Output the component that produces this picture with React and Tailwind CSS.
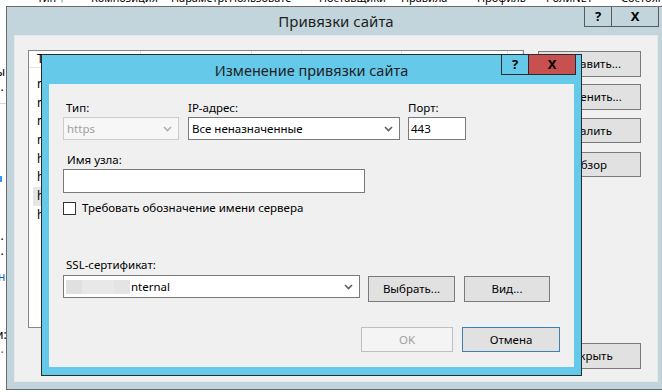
import React from "react";

function Chevron({ color = "#606060" }) {
  return (
    <svg width="9" height="6" viewBox="0 0 9 6" className="shrink-0">
      <polyline points="1,1 4.5,4.5 8,1" fill="none" stroke={color} strokeWidth="1.6" />
    </svg>
  );
}

function Button({ children, className = "" }) {
  return (
    <div
      className={
        "flex items-center justify-center border border-[#7a7a7a] bg-[#e1e1e1] text-[11.5px] text-black " +
        className
      }
    >
      {children}
    </div>
  );
}

function CaptionButtons({ dark, closeBg }) {
  return (
    <div className="flex h-[20px]">
      <div
        className={
          "flex w-[28px] items-center justify-center border-x border-b text-[13px] font-bold " +
          dark
        }
      >
        ?
      </div>
      <div
        className={
          "flex w-[47px] items-center justify-center border-r border-b text-[13px] font-bold " +
          dark +
          " " +
          closeBg
        }
      >
        X
      </div>
    </div>
  );
}

// column headers of the IIS list behind the dialogs: text, left, width
const headerCols = [
  ["Тип ↑", 37, 40],
  ["Композиция", 91, 76],
  ["Параметры", 171, 56],
  ["Пользовате", 229, 84],
  ["Поставщики", 319, 76],
  ["Правила", 401, 56],
  ["Профиль", 477, 50],
  ["РолиNET", 546, 60],
  ["Состояние", 621, 60],
];

const listRows = [
  "net.tcp",
  "net.pipe",
  "net.msmq",
  "msmq.formatname",
  "http",
  "https",
  "https",
  "https",
];

export default function App() {
  return (
    <div
      className="relative h-[392px] w-[662px] overflow-hidden bg-white text-black"
      style={{ fontFamily: '"Noto Sans", "Liberation Sans", sans-serif' }}
    >
      {/* IIS manager behind the dialogs */}
      <div className="relative h-[6px] overflow-hidden">
        {headerCols.map(([t, x, w]) => (
          <span
            key={t}
            className="absolute top-[-10px] overflow-hidden whitespace-nowrap text-[11px] leading-[16px]"
            style={{ left: x, width: w }}
          >
            {t}
          </span>
        ))}
      </div>
      <div className="absolute left-0 top-[64px] w-[6px] overflow-hidden text-[12px] leading-[16px]">
        <div className="-ml-[4px]">ы</div>
        <div className="-ml-[6px] -mt-[1px]">...</div>
        <div className="mt-[8px] h-px w-[6px] bg-[#d8d8d8]" />
        <div className="mt-[72px] h-[6px] w-[2px] bg-[#3399ff]" />
        <div className="-ml-[6px] mt-[46px]">...</div>
        <div className="-ml-[6px] -mt-[1px]">...</div>
        <div className="-ml-[2px] mt-[10px] text-[#1a5fb4]">н</div>
        <div className="-ml-[4px] mt-[42px]">и:</div>
        <div className="-ml-[6px] -mt-[2px] text-[#1a5fb4]">...</div>
      </div>

      {/* Привязки сайта */}
      <div className="absolute left-[6px] top-[6px] flex h-[384px] w-[660px] flex-col border border-[#6b6b6b] bg-[#c3d5dc]">
        <div className="relative flex h-[28px] shrink-0 items-start justify-end pr-[6px]">
          <div className="absolute inset-x-0 top-[4px] text-center text-[15px] leading-[20px] text-[#1e1e1e]">
            Привязки сайта
          </div>
          <div className="relative">
            <CaptionButtons dark="border-[#5a5a5a] text-black" closeBg="" />
          </div>
        </div>
        <div className="mx-[7px] mb-[7px] flex flex-1 border border-[#e4e9eb] bg-[#f0f0f0] pl-[13px] pr-[14px] pt-[14px]">
          <div className="flex h-[278px] w-[496px] flex-col overflow-hidden border border-[#828790] bg-white text-[12px]">
            <div className="flex h-[17px] shrink-0">
              {[
                ["Тип", 112],
                ["Имя узла", 111],
                ["Порт", 50],
                ["IP-адрес", 100],
                ["Сведения о привязке", 106],
                ["", 15],
              ].map(([t, w]) => (
                <div
                  key={t + w}
                  className="shrink-0 overflow-hidden whitespace-nowrap border-r border-b border-[#e5e5e5] pl-[8px] leading-[16px]"
                  style={{ width: w }}
                >
                  {t}
                </div>
              ))}
            </div>
            <div className="pt-[7px]">
              {listRows.map((r, i) => (
                <div
                  key={i}
                  className={"ml-[4px] h-[18.7px] pl-[4px] leading-[18px] " + (i === 6 ? "bg-[#e5e5e5]" : "")}
                >
                  {r}
                </div>
              ))}
            </div>
          </div>
          <div className="ml-[14px] flex w-[103px] flex-col">
            <Button className="mt-[1px] h-[26px]">Добавить...</Button>
            <Button className="mt-[7px] h-[26px]">Изменить...</Button>
            <Button className="mt-[8px] h-[25px]">Удалить</Button>
            <Button className="mt-[9px] h-[25px]">Обзор</Button>
            <Button className="mt-[166px] h-[26px]">Закрыть</Button>
          </div>
        </div>
      </div>

      {/* Изменение привязки сайта */}
      <div className="absolute left-[41px] top-[54px] flex h-[322px] w-[541px] flex-col border border-[#2b2b2b] bg-[#65c9ea]">
        <div className="relative flex h-[29px] shrink-0 items-start justify-end pr-[5px]">
          <div className="absolute inset-x-0 top-[5px] text-center text-[14.5px] leading-[20px] text-[#1e1e1e]">
            Изменение привязки сайта
          </div>
          <div className="relative">
            <CaptionButtons dark="border-[#2b2b2b] text-black" closeBg="bg-[#c75050]" />
          </div>
        </div>
        <div className="mx-[7px] flex h-[283px] flex-col bg-[#f0f0f0] pl-[14px] text-[11.5px] leading-[16px]">
          <div className="mt-[16px] flex">
            <div className="w-[125px] pl-[3px]">Тип:</div>
            <div className="w-[220px]">IP-адрес:</div>
            <div>Порт:</div>
          </div>
          <div className="mt-[1px] flex h-[23px]">
            <div className="flex w-[116px] items-center justify-between border border-[#cccccc] bg-[#f7f7f7] pl-[3px] pr-[6px] text-[#a0a0a0]">
              https
              <Chevron color="#b0b0b0" />
            </div>
            <div className="ml-[9px] flex w-[212px] items-center justify-between border border-[#7a7a7a] bg-white pl-[3px] pr-[6px]">
              Все неназначенные
              <Chevron />
            </div>
            <div className="ml-[8px] flex w-[58px] items-center border border-[#7a7a7a] bg-white pl-[2px]">
              443
            </div>
          </div>
          <div className="mt-[12px] pl-[4px]">Имя узла:</div>
          <div className="mt-[1px] h-[24px] w-[302px] border border-[#7a7a7a] bg-white" />
          <div className="mt-[7px] flex items-center">
            <div className="h-[13px] w-[13px] border border-[#333333] bg-white" />
            <div className="ml-[6px]">Требовать обозначение имени сервера</div>
          </div>
          <div className="mt-[41px] pl-[3px]">SSL-сертификат:</div>
          <div className="mt-[2px] flex items-start">
            <div className="flex h-[23px] w-[297px] items-center justify-between border border-[#7a7a7a] bg-white pl-[2px] pr-[6px]">
              <div className="flex items-center">
                <div className="h-[14px] w-[16px] bg-[#e0e0e0]" />
                <div className="h-[14px] w-[32px] bg-[#e8e8e8]" />
                <div className="mr-[1px] h-[14px] w-[16px] bg-[#e4e4e4]" />
                nternal
              </div>
              <Chevron />
            </div>
            <Button className="ml-[8px] mt-[1px] h-[26px] w-[87px]">Выбрать...</Button>
            <Button className="ml-[9px] mt-[1px] h-[26px] w-[86px]">Вид...</Button>
          </div>
          <div className="mt-[25px] flex">
            <div className="ml-[298px] flex h-[25px] w-[92px] items-center justify-center border border-[#bfbfbf] bg-[#f4f4f4] text-[#a0a0a0]">
              OK
            </div>
            <div className="ml-[9px] flex h-[25px] w-[98px] items-center justify-center border border-[#3c7fb1] bg-[#e1e1e1]">
              Отмена
            </div>
          </div>
        </div>
      </div>
    </div>
  );
}
